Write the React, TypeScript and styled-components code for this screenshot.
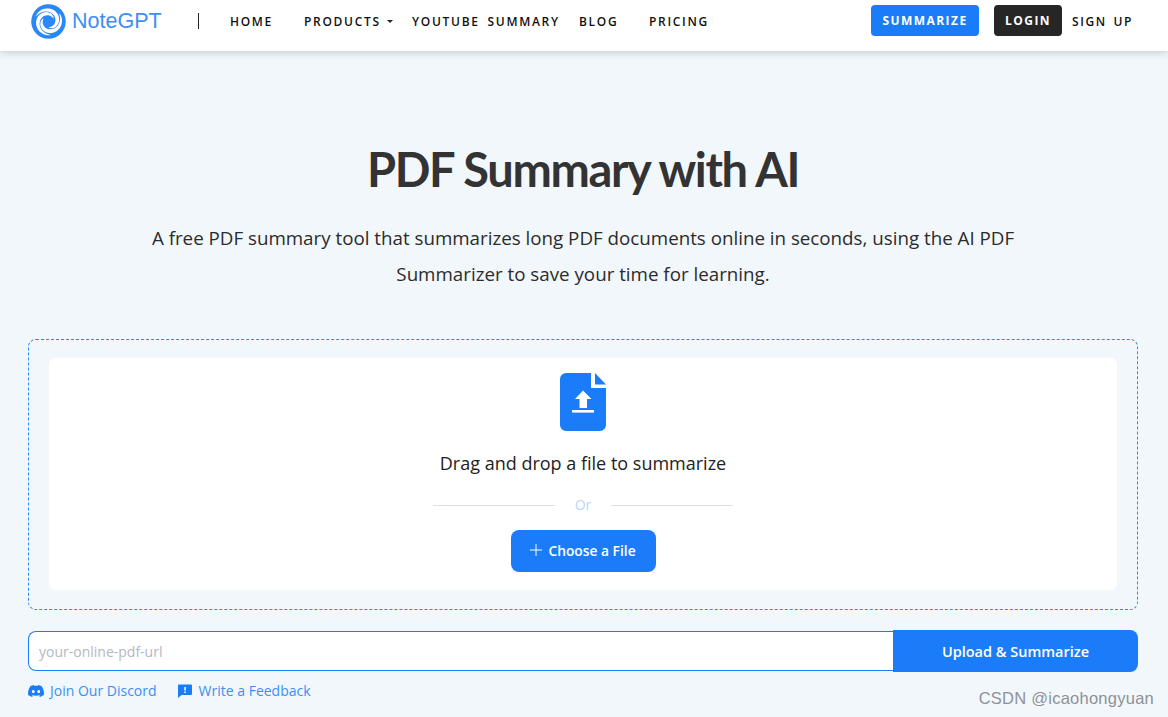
import React from 'react';
import styled, { createGlobalStyle } from 'styled-components';

const BLUE = '#1a7cf8';

const Global = createGlobalStyle`
  html, body {
    margin: 0;
    padding: 0;
    height: 100%;
    overflow: hidden;
    background: #f2f7fc;
    font-family: "Open Sans", "Noto Sans", sans-serif;
  }
`;

const Page = styled.div`
  position: relative;
  height: 717px;
  overflow: hidden;
`;

const Header = styled.header`
  display: flex;
  align-items: center;
  height: 51px;
  padding: 0 35px 9px 31px;
  box-sizing: border-box;
  background: #fff;
  box-shadow: 0 1px 8px rgba(40, 50, 60, 0.25);
`;

const Logo = styled.div`
  display: flex;
  align-items: center;
  gap: 6px;
  width: 167px;
  height: 42px;
  color: #3d8ff5;
  font-family: "Liberation Sans", sans-serif;
  font-size: 21.5px;
`;

const Divider = styled.span`
  width: 1px;
  height: 16px;
  background: #222;
`;

const Nav = styled.nav`
  display: flex;
  align-items: center;
  flex: 1;
  margin-left: 31px;
`;

const NavItem = styled.a<{ $w: number }>`
  display: flex;
  align-items: center;
  gap: 5px;
  width: ${(p) => p.$w}px;
  color: #111;
  font-size: 12px;
  font-weight: 600;
  letter-spacing: 1.7px;
  word-spacing: 3px;
  white-space: nowrap;
`;

const Caret = styled.i`
  width: 0;
  height: 0;
  margin-left: 1px;
  border-left: 3px solid transparent;
  border-right: 3px solid transparent;
  border-top: 3px solid #222;
`;

const Actions = styled.div`
  display: flex;
  align-items: center;
`;

const HeadButton = styled.a<{ $bg: string; $w: number; $mr: number }>`
  display: flex;
  align-items: center;
  justify-content: center;
  width: ${(p) => p.$w}px;
  height: 31px;
  margin-right: ${(p) => p.$mr}px;
  margin-bottom: 2px;
  border-radius: 4px;
  background: ${(p) => p.$bg};
  color: #fff;
  font-size: 12px;
  font-weight: 700;
  letter-spacing: 1.45px;
`;

const SignUp = styled.a`
  color: #111;
  font-size: 12px;
  font-weight: 600;
  letter-spacing: 1.6px;
  word-spacing: 2px;
`;

const Main = styled.main`
  padding: 0 30px 0 28px;
`;

const Title = styled.h1`
  margin: 91px 0 0;
  color: #333;
  font-family: Lato, sans-serif;
  font-size: 47px;
  font-weight: 700;
  letter-spacing: -1.35px;
  line-height: 54px;
  text-align: center;
`;

const Lead = styled.p`
  width: 880px;
  margin: 24px auto 0;
  color: #2b2b2b;
  font-size: 18.75px;
  line-height: 36px;
  text-align: center;
`;

const DropZone = styled.section`
  margin-top: 47px;
  padding: 18px 20px 19px;
  border: 1px dashed #2a88ff;
  border-radius: 8px;
`;

const DropInner = styled.div`
  display: flex;
  flex-direction: column;
  align-items: center;
  height: 232px;
  box-sizing: border-box;
  padding-top: 15px;
  border-radius: 6px;
  background: #fff;
`;

const DropText = styled.div`
  margin-top: 20px;
  color: #222;
  font-size: 18px;
  line-height: 24px;
`;

const OrRow = styled.div`
  display: flex;
  align-items: center;
  gap: 20px;
  width: 300px;
  margin-top: 20px;
  color: #b6d6fd;
  font-size: 14px;
  line-height: 20px;
  &::before,
  &::after {
    content: '';
    flex: 1;
    height: 1px;
    background: #dadfe8;
  }
`;

const ChooseButton = styled.button`
  display: flex;
  align-items: center;
  justify-content: center;
  gap: 6px;
  width: 145px;
  height: 42px;
  margin-top: 15px;
  padding: 0 0 2px;
  border: 0;
  border-radius: 8px;
  background: ${BLUE};
  color: #fff;
  font-family: inherit;
  font-size: 13.8px;
  font-weight: 600;
`;

const UrlRow = styled.div`
  display: flex;
  margin-top: 20px;
  height: 42px;
`;

const UrlInput = styled.input`
  flex: 1;
  min-width: 0;
  margin: 1px 0;
  padding: 0 10px;
  box-sizing: border-box;
  border: 1px solid ${BLUE};
  border-right: 0;
  border-radius: 8px 0 0 8px;
  background: #fff;
  font-family: inherit;
  font-size: 14px;
  outline: none;
  &::placeholder {
    color: #b5b8bf;
  }
`;

const UploadButton = styled.button`
  width: 245px;
  border: 0;
  border-radius: 0 8px 8px 0;
  background: ${BLUE};
  color: #fff;
  font-family: inherit;
  font-size: 14.5px;
  font-weight: 600;
`;

const Links = styled.div`
  display: flex;
  gap: 20px;
  margin-top: 9px;
`;

const LinkItem = styled.a`
  display: flex;
  align-items: center;
  gap: 6px;
  color: #3b8ff3;
  font-size: 14px;
  line-height: 20px;
`;

const Watermark = styled.div`
  position: absolute;
  right: 14px;
  top: 688px;
  color: #8e9196;
  font-family: "Liberation Sans", sans-serif;
  font-size: 16.5px;
  letter-spacing: 0.25px;
  line-height: 20px;
`;

// one tapered arm of the logo's swirl, from the rim in towards the middle
const swirlArm = () => {
  const outer: string[] = [];
  const inner: string[] = [];
  for (let i = 0; i <= 24; i++) {
    const t = i / 24;
    const a = (t * 250 * Math.PI) / 180;
    const r = 14 - t * 8;
    const w = 4 * Math.pow(Math.sin(Math.PI * t), 0.7);
    outer.push(`${((r + w / 2) * Math.cos(a)).toFixed(2)} ${((r + w / 2) * Math.sin(a)).toFixed(2)}`);
    inner.unshift(`${((r - w / 2) * Math.cos(a)).toFixed(2)} ${((r - w / 2) * Math.sin(a)).toFixed(2)}`);
  }
  return `M${outer.join('L')}L${inner.join('L')}Z`;
};

const SwirlLogo = () => {
  const arm = swirlArm();
  return (
    <svg width="35" height="35" viewBox="-18 -18 36 36">
      <circle r="17.8" fill="#2b87f5" />
      <path d={arm} fill="#fff" transform="rotate(200)" />
      <path d={arm} fill="#fff" transform="rotate(320)" />
      <path d={arm} fill="#fff" transform="rotate(80)" />
    </svg>
  );
};

const FileIcon = () => (
  <svg width="46" height="58" viewBox="0 0 46 58">
    <path d="M6 0H31V15H46V52a6 6 0 0 1-6 6H6a6 6 0 0 1-6-6V6a6 6 0 0 1 6-6Z" fill={BLUE} />
    <path d="M35 0L46 11.500H35Z" fill={BLUE} />
    <path d="M23 17.500L31.500 26H27V35H19.500V26H15Z" fill="#fff" />
    <rect x="12" y="37" width="22" height="2.600" fill="#fff" />
  </svg>
);

const PlusIcon = () => (
  <svg width="12" height="12" viewBox="0 0 12 12">
    <path d="M6 0V12M0 6H12" stroke="#fff" strokeWidth="1" />
  </svg>
);

const DiscordIcon = () => (
  <svg width="16" height="12" viewBox="0 0 16 12">
    <path
      fill="#1a7cf8"
      fillRule="evenodd"
      d="M13.500 1A13 13 0 0 0 10.200 0l-.4.8a12 12 0 0 0-3.600 0L5.800 0a13 13 0 0 0-3.300 1C.4 4.100-.2 7.100.1 10.100A13 13 0 0 0 4.100 12l.8-1.300-1.300-.6.3-.3a9.300 9.300 0 0 0 8.200 0l.3.3-1.300.6.8 1.300a13 13 0 0 0 4-1.900c.4-3.500-.6-6.500-2.400-9.100ZM5.300 8.200c-.8 0-1.400-.7-1.400-1.600S4.500 5 5.300 5s1.500.7 1.400 1.600c0 .9-.6 1.600-1.400 1.600Zm5.400 0c-.8 0-1.400-.7-1.400-1.600S9.900 5 10.700 5s1.500.7 1.400 1.600c0 .9-.6 1.600-1.400 1.600Z"
    />
  </svg>
);

const FeedbackIcon = () => (
  <svg width="16" height="16" viewBox="0 0 16 16">
    <path d="M2 1.500H14a1 1 0 0 1 1 1V11a1 1 0 0 1-1 1H4.500L1 15V2.500a1 1 0 0 1 1-1Z" fill="#1a7cf8" />
    <rect x="7.300" y="4" width="1.500" height="3.500" fill="#fff" />
    <rect x="7.300" y="8.500" width="1.500" height="1.500" fill="#fff" />
  </svg>
);

export default function App() {
  return (
    <Page>
      <Global />
      <Header>
        <Logo>
          <SwirlLogo />
          NoteGPT
        </Logo>
        <Divider />
        <Nav>
          <NavItem $w={74}>HOME</NavItem>
          <NavItem $w={108}>
            PRODUCTS <Caret />
          </NavItem>
          <NavItem $w={167}>YOUTUBE SUMMARY</NavItem>
          <NavItem $w={70}>BLOG</NavItem>
          <NavItem $w={80}>PRICING</NavItem>
        </Nav>
        <Actions>
          <HeadButton $bg={BLUE} $w={108} $mr={15}>
            SUMMARIZE
          </HeadButton>
          <HeadButton $bg="#262626" $w={68} $mr={10}>
            LOGIN
          </HeadButton>
          <SignUp>SIGN UP</SignUp>
        </Actions>
      </Header>
      <Main>
        <Title>PDF Summary with AI</Title>
        <Lead>
          A free PDF summary tool that summarizes long PDF documents online in seconds, using the AI PDF Summarizer to
          save your time for learning.
        </Lead>
        <DropZone>
          <DropInner>
            <FileIcon />
            <DropText>Drag and drop a file to summarize</DropText>
            <OrRow>Or</OrRow>
            <ChooseButton>
              <PlusIcon />
              Choose a File
            </ChooseButton>
          </DropInner>
        </DropZone>
        <UrlRow>
          <UrlInput placeholder="your-online-pdf-url" />
          <UploadButton>Upload &amp; Summarize</UploadButton>
        </UrlRow>
        <Links>
          <LinkItem>
            <DiscordIcon />
            Join Our Discord
          </LinkItem>
          <LinkItem>
            <FeedbackIcon />
            Write a Feedback
          </LinkItem>
        </Links>
      </Main>
      <Watermark>CSDN @icaohongyuan</Watermark>
    </Page>
  );
}
